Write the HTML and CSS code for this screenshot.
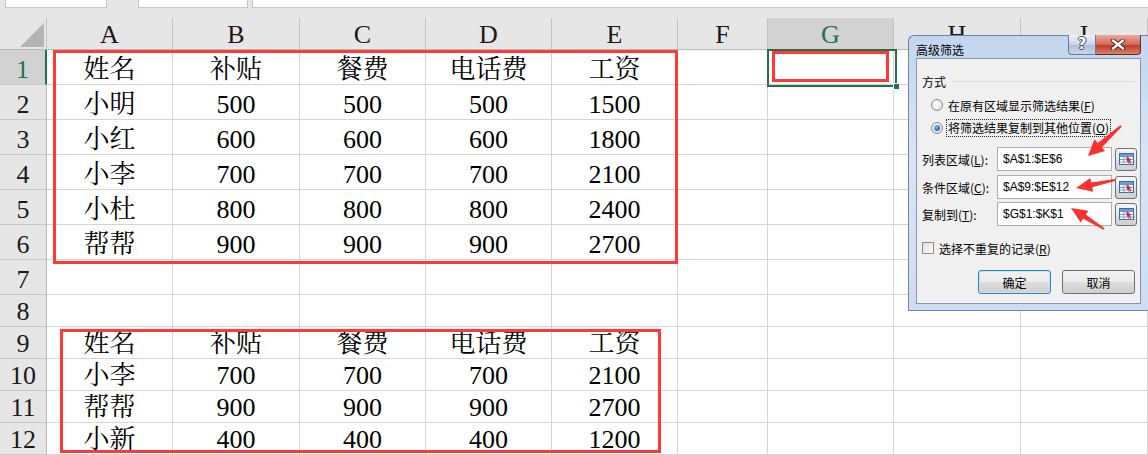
FILE: index.html
```html
<!DOCTYPE html>
<html>
<head>
    <meta charset="utf-8">
    <link rel="stylesheet" href="styles.css">
</head>
<body>
    <div class="topbar"><span class="box b1"></span><span class="box b2"></span><span class="box b3"></span></div>

    <div class="sheet">
        <div class="row head">
            <div class="corner"><svg width="46" height="31" viewBox="0 0 46 31"><polygon points="20,29 44,29 44,5" fill="#b4b4b4"/></svg></div>
            <div>A</div><div>B</div><div>C</div><div>D</div><div>E</div><div>F</div><div class="sel">G</div><div>H</div><div>I</div>
        </div>
        <div class="row"><div class="rh sel">1</div><div>姓名</div><div>补贴</div><div>餐费</div><div>电话费</div><div>工资</div><div></div><div></div><div></div><div></div></div>
        <div class="row"><div class="rh">2</div><div>小明</div><div>500</div><div>500</div><div>500</div><div>1500</div><div></div><div></div><div></div><div></div></div>
        <div class="row"><div class="rh">3</div><div>小红</div><div>600</div><div>600</div><div>600</div><div>1800</div><div></div><div></div><div></div><div></div></div>
        <div class="row"><div class="rh">4</div><div>小李</div><div>700</div><div>700</div><div>700</div><div>2100</div><div></div><div></div><div></div><div></div></div>
        <div class="row"><div class="rh">5</div><div>小杜</div><div>800</div><div>800</div><div>800</div><div>2400</div><div></div><div></div><div></div><div></div></div>
        <div class="row"><div class="rh">6</div><div>帮帮</div><div>900</div><div>900</div><div>900</div><div>2700</div><div></div><div></div><div></div><div></div></div>
        <div class="row"><div class="rh">7</div><div></div><div></div><div></div><div></div><div></div><div></div><div></div><div></div><div></div></div>
        <div class="row short"><div class="rh">8</div><div></div><div></div><div></div><div></div><div></div><div></div><div></div><div></div><div></div></div>
        <div class="row short"><div class="rh">9</div><div>姓名</div><div>补贴</div><div>餐费</div><div>电话费</div><div>工资</div><div></div><div></div><div></div><div></div></div>
        <div class="row short"><div class="rh">10</div><div>小李</div><div>700</div><div>700</div><div>700</div><div>2100</div><div></div><div></div><div></div><div></div></div>
        <div class="row short"><div class="rh">11</div><div>帮帮</div><div>900</div><div>900</div><div>900</div><div>2700</div><div></div><div></div><div></div><div></div></div>
        <div class="row short"><div class="rh">12</div><div>小新</div><div>400</div><div>400</div><div>400</div><div>1200</div><div></div><div></div><div></div><div></div></div>
    </div>

    <!-- annotations over the sheet -->
    <div class="mark list-mark"></div>
    <div class="mark crit-mark"></div>
    <div class="active-cell"><span class="handle"></span></div>
    <div class="mark target-mark"></div>

    <div class="dialog">
        <div class="titlebar">
            <span class="title">高级筛选</span>
            <div class="tbtns">
                <span class="help">?</span>
                <span class="close"><svg width="16" height="11" viewBox="0 0 16 11"><path d="M3 1.5L13 9.5M13 1.5L3 9.5" stroke="#4a1d16" stroke-width="4.2" stroke-linecap="round"/><path d="M3 1.5L13 9.5M13 1.5L3 9.5" stroke="#fff" stroke-width="2.4" stroke-linecap="round"/></svg></span>
            </div>
        </div>
        <div class="client">
            <div class="legend"><span>方式</span><span class="line"></span></div>
            <div class="radio-row r1"><span class="radio"></span><span>在原有区域显示筛选结果(<u>F</u>)</span></div>
            <div class="radio-row r2"><span class="radio on"></span><span class="focus">将筛选结果复制到其他位置(<u>O</u>)</span></div>
            <div class="field f1">
                <label>列表区域(<u>L</u>):</label>
                <span class="input">$A$1:$E$6</span>
                <span class="pick"><svg width="15" height="12" viewBox="0 0 15 12"><rect x="0.5" y="0.5" width="14" height="11" fill="#fff" stroke="#3a6cb5"/><rect x="1" y="1" width="13" height="3" fill="#6e9bd8"/><path d="M1 6.5H14M1 9H14M5 4V11.5M9.5 4V11.5" stroke="#7aa2d8"/><path d="M7 3L12.5 7L10.8 7.6L12.3 10.2L11.1 10.8L9.7 8.3L8.4 9.4Z" fill="#d42a2a"/></svg></span>
            </div>
            <div class="field f2">
                <label>条件区域(<u>C</u>):</label>
                <span class="input">$A$9:$E$12</span>
                <span class="pick"><svg width="15" height="12" viewBox="0 0 15 12"><rect x="0.5" y="0.5" width="14" height="11" fill="#fff" stroke="#3a6cb5"/><rect x="1" y="1" width="13" height="3" fill="#6e9bd8"/><path d="M1 6.5H14M1 9H14M5 4V11.5M9.5 4V11.5" stroke="#7aa2d8"/><path d="M7 3L12.5 7L10.8 7.6L12.3 10.2L11.1 10.8L9.7 8.3L8.4 9.4Z" fill="#d42a2a"/></svg></span>
            </div>
            <div class="field f3">
                <label>复制到(<u>T</u>):</label>
                <span class="input">$G$1:$K$1</span>
                <span class="pick"><svg width="15" height="12" viewBox="0 0 15 12"><rect x="0.5" y="0.5" width="14" height="11" fill="#fff" stroke="#3a6cb5"/><rect x="1" y="1" width="13" height="3" fill="#6e9bd8"/><path d="M1 6.5H14M1 9H14M5 4V11.5M9.5 4V11.5" stroke="#7aa2d8"/><path d="M7 3L12.5 7L10.8 7.6L12.3 10.2L11.1 10.8L9.7 8.3L8.4 9.4Z" fill="#d42a2a"/></svg></span>
            </div>
            <div class="check-row"><span class="check"></span><span>选择不重复的记录(<u>R</u>)</span></div>
            <div class="buttons">
                <span class="btn default">确定</span>
                <span class="btn">取消</span>
            </div>
        </div>
    </div>

    <svg class="arrows" width="1148" height="455" viewBox="0 0 1148 455">
        <polygon points="1121.7,126.7 1101.8,147.4 1105.2,151.1 1088,156 1094.4,139.3 1097.8,143 1120.3,125.3" fill="#ff3030"/>
        <polygon points="1115.2,181 1092.2,187.3 1093.1,191.7 1076,188 1090.3,177.9 1091.2,182.4 1114.8,179" fill="#ff3030"/>
        <polygon points="1104.5,228.2 1085.8,214.5 1088.3,210.7 1071,208 1080.7,222.5 1083.2,218.7 1103.5,229.8" fill="#ff3030"/>
    </svg>
</body>
</html>
```

FILE: styles.css
```css
body {
    margin: 0;
    width: 1148px;
    height: 455px;
    overflow: hidden;
    position: relative;
    background: #fff;
    font-family: "Liberation Serif", "Noto Serif CJK SC", "Noto Sans CJK SC", serif;
}

.topbar {
    height: 18px;
    background: #e6e6e6;
    display: flex;
    align-items: flex-start;
}
.box {
    height: 7px;
    background: #fff;
    border: 1px solid #c6c6c6;
    border-top: none;
}
.b1 { margin-left: 5px; width: 100px; }
.b2 { margin-left: 31px; width: 108px; }
.b3 { margin-left: 4px; flex: 1; border-right: none; }

.row {
    display: grid;
    grid-template-columns: 47px 126px 127px 126px 126px 126px 90px 126px 127px 127px;
    height: 35px;
}
.row.short { height: 32px; }
.row.head { height: 32px; background: #e6e6e6; }
.row > div {
    box-sizing: border-box;
    border-right: 1px solid #d4d4d4;
    border-bottom: 1px solid #d4d4d4;
    display: flex;
    align-items: flex-end;
    justify-content: center;
    font-size: 26px;
    line-height: 28px;
    color: #000;
}
.head > div {
    border-right-color: #c2c2c2;
    border-bottom-color: #b9b9b9;
    color: #1a1a1a;
}
.head > .corner { align-items: flex-start; justify-content: flex-start; }
.head > .sel { background: #d2d2d2; color: #217346; }
.row > .rh {
    background: #e6e6e6;
    border-right-color: #b9b9b9;
    border-bottom-color: #c8c8c8;
    color: #1a1a1a;
}
.row > .rh.sel {
    background: #d2d2d2;
    color: #217346;
    border-right: 2px solid #217346;
}

.mark {
    position: absolute;
    box-sizing: border-box;
    border: 3px solid #ff3838;
}
.list-mark { left: 53px; top: 50px; width: 625px; height: 214px; }
.crit-mark { left: 60px; top: 329px; width: 601px; height: 124px; }
.target-mark { left: 772px; top: 51px; width: 117px; height: 31px; }
.active-cell {
    position: absolute;
    left: 767px;
    top: 49px;
    width: 130px;
    height: 38px;
    box-sizing: border-box;
    border: 2px solid #217346;
}
.handle {
    position: absolute;
    right: -5px;
    bottom: -5px;
    width: 5px;
    height: 5px;
    background: #217346;
    border: 1px solid #fff;
}

.dialog {
    position: absolute;
    left: 908px;
    top: 35px;
    width: 240px;
    height: 276px;
    box-sizing: border-box;
    border: 1px solid #6f84a2;
    border-right: none;
    border-radius: 6px 0 0 0;
    background: linear-gradient(#c3d6ee, #d9e5f4 45%, #cddcf0);
    padding: 0 7px 0 7px;
    font-family: "Noto Sans CJK SC", sans-serif;
    font-size: 12px;
    color: #000;
}
.titlebar {
    height: 22px;
    display: flex;
    align-items: flex-start;
}
.title { margin-top: 7px; line-height: 14px; }
.tbtns { margin-left: auto; display: flex; margin-top: -1px; }
.help, .close {
    box-sizing: border-box;
    height: 20px;
    display: flex;
    align-items: center;
    justify-content: center;
}
.help {
    width: 28px;
    border: 1px solid #6b7c95;
    border-top: none;
    border-radius: 0 0 0 4px;
    background: linear-gradient(#eef3f9, #c9d6e6 50%, #aebfd6 51%, #c6d4e6);
    color: #fff;
    font-family: "DejaVu Sans", sans-serif;
    font-weight: bold;
    font-size: 15px;
    line-height: 15px;
    text-shadow: 1px 0 0 #3d4a5c, -1px 0 0 #3d4a5c, 0 1px 0 #3d4a5c, 0 -1px 0 #3d4a5c;
}
.close {
    width: 45px;
    border: 1px solid #6b2a20;
    border-top: none;
    border-left: none;
    border-radius: 0 0 4px 0;
    background: linear-gradient(#eaa89a, #d06a56 50%, #b9371f 51%, #d98270);
}

.client {
    height: 246px;
    box-sizing: border-box;
    border: 1px solid #8597b0;
    background: #f0f0f0;
    padding: 0 3px 0 5px;
    display: flex;
    flex-direction: column;
}
.legend {
    display: flex;
    align-items: center;
    height: 16px;
    margin-top: 14px;
}
.line {
    flex: 1;
    border-top: 1px solid #d5dfe5;
    margin-left: 6px;
    margin-right: 2px;
}
.radio-row {
    display: flex;
    align-items: center;
    height: 18px;
    margin-left: 9px;
}
.r1 { margin-top: 7px; }
.r2 { margin-top: 5px; }
.radio {
    position: relative;
    width: 12px;
    height: 12px;
    box-sizing: border-box;
    border-radius: 50%;
    border: 1px solid #8a8a8a;
    background: radial-gradient(circle at 40% 40%, #fff, #dcdcdc);
    margin-right: 5px;
}
.radio.on::after {
    content: '';
    position: absolute;
    left: 2px;
    top: 2px;
    width: 6px;
    height: 6px;
    border-radius: 50%;
    background: radial-gradient(circle at 35% 35%, #8fc4f5, #1a5fb4 70%);
}
.focus {
    border: 1px dotted #222;
    padding: 0 1px;
    margin-left: -2px;
    line-height: 16px;
}
.field {
    display: flex;
    align-items: center;
    height: 24px;
}
.f1 { margin-top: 10px; }
.f2 { margin-top: 4px; }
.f3 { margin-top: 3px; }
.field label { width: 75px; }
.input {
    width: 115px;
    height: 24px;
    box-sizing: border-box;
    border: 1px solid #abadb3;
    background: #fff;
    font-family: "Liberation Sans", sans-serif;
    font-size: 12px;
    padding-left: 5px;
    display: flex;
    align-items: center;
}
.pick {
    margin-left: 3px;
    width: 22px;
    height: 23px;
    box-sizing: border-box;
    border: 1px solid #707070;
    border-radius: 3px;
    background: linear-gradient(#f6f6f6, #e9e9e9 50%, #dcdcdc 51%, #d0d0d0);
    display: flex;
    align-items: center;
    justify-content: center;
}
.check-row {
    display: flex;
    align-items: center;
    height: 14px;
    margin-top: 15px;
}
.check {
    width: 12px;
    height: 12px;
    box-sizing: border-box;
    border: 1px solid #8f8f8f;
    background: linear-gradient(135deg, #dcdcdc, #fff);
    margin-right: 5px;
}
.buttons {
    display: flex;
    justify-content: flex-end;
    gap: 11px;
    margin-top: 15px;
    margin-right: 2px;
}
.btn {
    width: 73px;
    height: 24px;
    box-sizing: border-box;
    border: 1px solid #707070;
    border-radius: 3px;
    background: linear-gradient(#f2f2f2, #ebebeb 50%, #dddddd 51%, #cfcfcf);
    display: flex;
    align-items: center;
    justify-content: center;
}
.btn.default {
    border-color: #3c7fb1;
    box-shadow: inset 0 0 0 1px #bfe6f9;
}

.arrows {
    position: absolute;
    left: 0;
    top: 0;
    pointer-events: none;
}
```
